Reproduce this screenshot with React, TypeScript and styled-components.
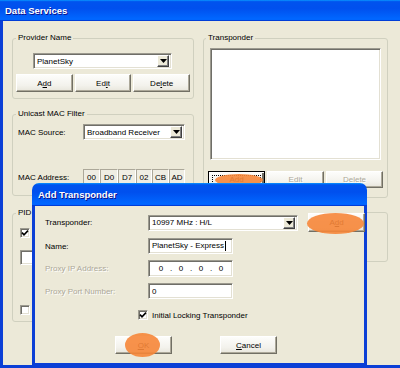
import styled, { createGlobalStyle, css } from 'styled-components';

const GlobalStyle = createGlobalStyle`
  * { box-sizing: border-box; }
  html, body { margin: 0; padding: 0; background: #ece9d8; }
  body {
    font-family: "Liberation Sans", Arial, sans-serif;
    font-size: 8px;
    color: #000;
  }
  #root { width: 400px; height: 368px; overflow: hidden; }
`;

const XP_TITLE =
  'linear-gradient(180deg, #0997FF 0%, #0053EE 8%, #0050EE 40%, #0066FF 88%, #0066FF 93%, #005BFF 95%, #003DD7 96%, #003DD7 100%)';
const XP_FRAME = '#0B3FD6';

const Window = styled.div`
  position: relative;
  width: 400px;
  height: 368px;
  display: flex;
  flex-direction: column;
`;

const TitleBar = styled.div<{ $h: number; $pl: number; $round: string }>`
  flex: none;
  height: ${(p) => p.$h}px;
  display: flex;
  align-items: center;
  padding-left: ${(p) => p.$pl}px;
  background: ${XP_TITLE};
  border-radius: ${(p) => p.$round};
  color: #fff;
  font-weight: bold;
  font-size: 9.5px;
  text-shadow: 1px 1px #0f1089;
`;

const Frame = styled.div`
  flex: 1;
  display: grid;
  grid-template-columns: 182px 185px;
  column-gap: 9px;
  align-items: start;
  padding: 12px 0 0 9px;
  border-left: 3px solid ${XP_FRAME};
  border-bottom: 3px solid ${XP_FRAME};
  background: #ece9d8;
`;

const Column = styled.div`
  display: flex;
  flex-direction: column;
`;

const Group = styled.fieldset<{ $pad: string; $mt?: number }>`
  margin: ${(p) => p.$mt ?? 0}px 0 0 0;
  padding: ${(p) => p.$pad};
  border: 1px solid #d0d0bf;
  border-radius: 3px;
  min-width: 0;
`;

const Legend = styled.legend<{ $ml?: number }>`
  padding: 0 2px;
  margin-left: ${(p) => p.$ml ?? 0}px;
  line-height: 10px;
  font-size: 8px;
`;

const PlainBox = styled.div<{ $mt: number; $h: number }>`
  margin-top: ${(p) => p.$mt}px;
  height: ${(p) => p.$h}px;
  border: 1px solid #d0d0bf;
  border-radius: 3px;
`;

const sunken = css`
  border: 1px solid;
  border-color: #9c9a8f #ffffff #ffffff #9c9a8f;
  box-shadow: inset 1px 1px #6f6e68, inset -1px -1px #e3e0d3;
`;

const Field = styled.div<{ $w?: number; $h: number; $ml?: number }>`
  ${sunken};
  position: relative;
  width: ${(p) => (p.$w ? `${p.$w}px` : 'auto')};
  height: ${(p) => p.$h}px;
  margin-left: ${(p) => p.$ml ?? 0}px;
  background: #fff;
  display: flex;
  align-items: center;
  padding: 0 2px 0 3px;
  white-space: nowrap;
  overflow: hidden;
`;

const FieldText = styled.span`
  flex: 1;
`;

const Caret = styled.span`
  display: inline-block;
  width: 1px;
  height: 10px;
  background: #000;
  vertical-align: middle;
  margin-left: 1px;
`;

const DropButton = styled.span`
  flex: none;
  width: 12px;
  height: calc(100% - 2px);
  display: flex;
  align-items: center;
  justify-content: center;
  background: #ece9d8;
  border: 1px solid;
  border-color: #ffffff #404040 #404040 #ffffff;
  box-shadow: inset -1px -1px #808080;
`;

const ListBox = styled.div`
  ${sunken};
  margin: 0 2px;
  height: 112px;
  background: #fff;
`;

const ButtonRow = styled.div<{ $mt: number; $h: number; $gap: number; $pl?: number }>`
  display: flex;
  gap: ${(p) => p.$gap}px;
  margin-top: ${(p) => p.$mt}px;
  height: ${(p) => p.$h}px;
  padding-left: ${(p) => p.$pl ?? 0}px;
`;

const Button = styled.button<{ $w?: number; $h?: number; $focus?: boolean }>`
  position: relative;
  flex: ${(p) => (p.$w ? 'none' : '1')};
  width: ${(p) => (p.$w ? `${p.$w}px` : 'auto')};
  height: ${(p) => (p.$h ? `${p.$h}px` : '100%')};
  padding: 0;
  font: inherit;
  font-size: 8px;
  color: #000;
  background: linear-gradient(180deg, #fdfdfb 0%, #f3f2ec 65%, #e8e6dc 100%);
  border: 1px solid;
  border-color: #ffffff #716f64 #716f64 #ffffff;
  box-shadow: inset -1px -1px #aca899;
  ${(p) =>
    p.$focus &&
    css`
      border-color: #000;
      box-shadow: inset 1px 1px #fff, inset -2px -2px #716f64;
      &::after {
        content: '';
        position: absolute;
        inset: 3px;
        border: 1px dotted #000;
      }
    `}
  &:disabled {
    color: #aca899;
    text-shadow: 1px 1px #fff;
  }
`;

const Mark = styled.span<{ $l: number; $t: number; $w: number; $h: number }>`
  position: absolute;
  left: ${(p) => p.$l}px;
  top: ${(p) => p.$t}px;
  width: ${(p) => p.$w}px;
  height: ${(p) => p.$h}px;
  border-radius: 50%;
  background: rgba(246, 134, 56, 0.9);
  z-index: 2;
`;

const MacRow = styled.div<{ $mt?: number; $h: number }>`
  display: grid;
  grid-template-columns: 65px auto;
  align-items: center;
  height: ${(p) => p.$h}px;
  margin-top: ${(p) => p.$mt ?? 0}px;
`;

const MacCells = styled.div`
  display: flex;
  height: 100%;
`;

const MacCell = styled.span<{ $w: number }>`
  width: ${(p) => p.$w}px;
  height: 100%;
  display: flex;
  align-items: center;
  justify-content: center;
  border: 1px solid;
  border-color: #aca899 #ffffff #ffffff #aca899;
  background: #efede3;
`;

const CheckBox = styled.span<{ $mt?: number }>`
  ${sunken};
  flex: none;
  width: 10px;
  height: 10px;
  margin-top: ${(p) => p.$mt ?? 0}px;
  background: #fff;
  display: flex;
  align-items: center;
  justify-content: center;
`;

const PidField = styled.div`
  ${sunken};
  margin-top: 12px;
  width: 60px;
  height: 15px;
  background: #fff;
`;

const Dialog = styled.div`
  position: absolute;
  left: 32px;
  top: 183px;
  width: 335px;
  height: 183px;
  display: flex;
  flex-direction: column;
  z-index: 5;
`;

const DialogBody = styled.div`
  flex: 1;
  background: #ece9d8;
  border: 3px solid ${XP_FRAME};
  border-top: none;
  padding: 7px 0 0 10px;
`;

const FormRow = styled.div<{ $mt: number; $h: number }>`
  display: grid;
  grid-template-columns: 93px auto auto;
  column-gap: 10px;
  align-items: center;
  justify-content: start;
  margin-top: ${(p) => p.$mt}px;
  height: ${(p) => p.$h}px;
`;

const Label = styled.span<{ $disabled?: boolean }>`
  white-space: nowrap;
  ${(p) =>
    p.$disabled &&
    css`
      color: #aca899;
      text-shadow: 1px 1px #fff;
    `}
`;

const CheckRow = styled.div`
  display: flex;
  align-items: center;
  gap: 4px;
  margin: 11px 0 0 93px;
  height: 10px;
`;

const Octet = styled.span<{ $w: number }>`
  width: ${(p) => p.$w}px;
  text-align: center;
`;

const IpWrap = styled.div`
  display: flex;
  padding-left: 3px;
`;

function Arrow() {
  return (
    <svg width="7" height="4" viewBox="0 0 7 4">
      <polygon points="0,0 7,0 3.5,4" fill="#000" />
    </svg>
  );
}

function Check() {
  return (
    <svg width="8" height="8" viewBox="0 0 8 8">
      <path d="M1 3.6 L3 5.8 L7 1.6" stroke="#000" strokeWidth="1.6" fill="none" />
    </svg>
  );
}

function Combo({ text, w, h, ml }: { text: string; w: number; h: number; ml?: number }) {
  return (
    <Field $w={w} $h={h} $ml={ml}>
      <FieldText>{text}</FieldText>
      <DropButton>
        <Arrow />
      </DropButton>
    </Field>
  );
}

const macBytes = [
  { v: '00', w: 17 },
  { v: 'D0', w: 18 },
  { v: 'D7', w: 18 },
  { v: '02', w: 16 },
  { v: 'CB', w: 17 },
  { v: 'AD', w: 16 },
];

export default function App() {
  return (
    <>
      <GlobalStyle />
      <Window>
        <TitleBar $h={21} $pl={5} $round="0">
          Data Services
        </TitleBar>
        <Frame>
          <Column>
            <Group $pad="10px 3px 6px 3px">
              <Legend>Provider Name</Legend>
              <Combo text="PlanetSky" w={139} h={16} ml={17} />
              <ButtonRow $mt={5} $h={18} $gap={2}>
                <Button>
                  A<u>d</u>d
                </Button>
                <Button>
                  Ed<u>i</u>t
                </Button>
                <Button>
                  De<u>l</u>ete
                </Button>
              </ButtonRow>
            </Group>

            <Group $pad="5px 5px 9px 5px" $mt={10}>
              <Legend $ml={-2}>Unicast MAC Filter</Legend>
              <MacRow $h={16}>
                <span>MAC Source:</span>
                <Combo text="Broadband Receiver" w={102} h={16} />
              </MacRow>
              <MacRow $mt={29} $h={17}>
                <span>MAC Address:</span>
                <MacCells>
                  {macBytes.map((b) => (
                    <MacCell key={b.v} $w={b.w}>
                      {b.v}
                    </MacCell>
                  ))}
                </MacCells>
              </MacRow>
            </Group>

            <Group $pad="0 7px 6px 7px" $mt={12}>
              <Legend $ml={-4}>PID</Legend>
              <CheckBox $mt={10}>
                <Check />
              </CheckBox>
              <PidField />
              <CheckBox $mt={40} />
            </Group>
          </Column>

          <Column>
            <Group $pad="5px 4px 9px 4px">
              <Legend $ml={-2}>Transponder</Legend>
              <ListBox />
              <ButtonRow $mt={11} $h={17} $gap={2}>
                <Button $focus>
                  A<u>d</u>d
                  <Mark $l={6} $t={2} $w={48} $h={12} />
                </Button>
                <Button disabled>
                  Ed<u>i</u>t
                </Button>
                <Button disabled>
                  De<u>l</u>ete
                </Button>
              </ButtonRow>
            </Group>
            <PlainBox $mt={14} $h={50} />
          </Column>
        </Frame>

        <Dialog>
          <TitleBar $h={23} $pl={6} $round="7px 7px 0 0">
            Add Transponder
          </TitleBar>
          <DialogBody>
            <FormRow $mt={0} $h={19}>
              <Label>Transponder:</Label>
              <Combo text="10997 MHz  :  H/L" w={150} h={16} />
              <Button $w={57} $h={19}>
                A<u>d</u>d
                <Mark $l={-2} $t={-1} $w={57} $h={21} />
              </Button>
            </FormRow>
            <FormRow $mt={6} $h={16}>
              <Label>Name:</Label>
              <Field $w={85} $h={16}>
                <span>
                  PlanetSky - Express
                  <Caret />
                </span>
              </Field>
            </FormRow>
            <FormRow $mt={6} $h={17}>
              <Label $disabled>Proxy IP Address:</Label>
              <Field $w={85} $h={17}>
                <IpWrap>
                  <Octet $w={12}>0</Octet>
                  <Octet $w={8}>.</Octet>
                  <Octet $w={12}>0</Octet>
                  <Octet $w={8}>.</Octet>
                  <Octet $w={12}>0</Octet>
                  <Octet $w={8}>.</Octet>
                  <Octet $w={12}>0</Octet>
                </IpWrap>
              </Field>
            </FormRow>
            <FormRow $mt={6} $h={16}>
              <Label $disabled>Proxy Port Number:</Label>
              <Field $w={85} $h={16}>
                <span>0</span>
              </Field>
            </FormRow>
            <CheckRow>
              <CheckBox>
                <Check />
              </CheckBox>
              <span>Initial Locking Transponder</span>
            </CheckRow>
            <ButtonRow $mt={16} $h={18} $gap={48} $pl={70}>
              <Button $w={57}>
                <u>O</u>K
                <Mark $l={9} $t={-4} $w={35} $h={24} />
              </Button>
              <Button $w={57}>
                <u>C</u>ancel
              </Button>
            </ButtonRow>
          </DialogBody>
        </Dialog>
      </Window>
    </>
  );
}
